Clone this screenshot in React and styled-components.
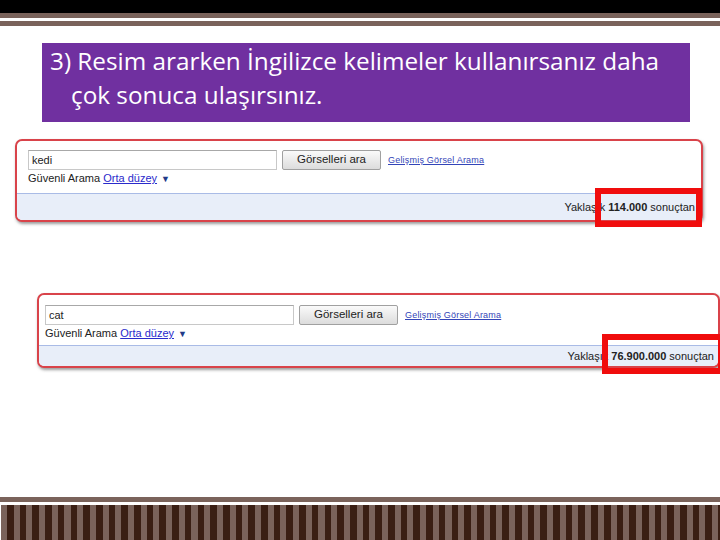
import React from 'react'
import styled, { createGlobalStyle } from 'styled-components'

const Global = createGlobalStyle`
  html, body { margin: 0; padding: 0; background: #fff; }
  body { width: 720px; height: 540px; overflow: hidden; }
`

const Slide = styled.div`
  width: 720px;
  height: 540px;
  display: flex;
  flex-direction: column;
  background: #fff;
`

const TopBlack = styled.div`
  height: 13px;
  background: #000;
`

const Rule = styled.div`
  height: 5px;
  background: #7a635b;
  margin-top: ${props => props.gap || 0}px;
`

const Title = styled.div`
  margin: 17px 0 0 42px;
  width: 648px;
  height: 79px;
  box-sizing: border-box;
  background: #7030a0;
  color: #fff;
  font-family: "Open Sans", Lato, sans-serif;
  font-size: 24.3px;
  line-height: 34px;
  padding: 1px 8px 0 8px;
  p { margin: 0; white-space: nowrap; }
  p + p { padding-left: 21px; }
`

const Shot = styled.div`
  position: relative;
  margin: ${props => props.top}px 0 0 ${props => props.left}px;
  width: ${props => props.width}px;
  height: ${props => props.height}px;
  box-sizing: border-box;
  border: 2px solid #d9434a;
  border-radius: 7px;
  box-shadow: 1px 2px 3px rgba(60, 60, 60, 0.5);
  background: #fff;
  display: flex;
  flex-direction: column;
  font-family: "Liberation Sans", Arial, sans-serif;
`

const Search = styled.div`
  padding: ${props => props.pad}px 0 0 ${props => props.inset}px;
  flex: 1;
`

const Row = styled.div`
  display: flex;
  align-items: center;
  gap: 5px;
`

const Input = styled.div`
  width: 249px;
  height: 20px;
  box-sizing: border-box;
  border: 1px solid #c8c8c8;
  border-top-color: #a8a8a8;
  font-size: 11px;
  line-height: 18px;
  padding-left: 3px;
  color: #222;
`

const Button = styled.div`
  width: 99px;
  height: 20px;
  box-sizing: border-box;
  border: 1px solid #a0a0a0;
  border-radius: 2px;
  background: linear-gradient(#fafafa, #dcdcdc);
  font-size: 11.5px;
  line-height: 17px;
  text-align: center;
  color: #222;
`

const Advanced = styled.a`
  font-size: 9px;
  color: #3345b8;
  text-decoration: underline;
  margin-left: 2px;
  letter-spacing: 0.2px;
`

const Safe = styled.div`
  font-size: 11px;
  color: #222;
  margin-top: 2px;
  a { color: #2a2acc; text-decoration: underline; }
  span { color: #223a88; font-size: 9px; margin-left: 4px; }
`

const ResultBar = styled.div`
  height: ${props => props.h}px;
  border-top: 1px solid #a9bbe6;
  background: #e8eef9;
  border-radius: 0 0 5px 5px;
  display: flex;
  align-items: center;
  justify-content: flex-end;
  padding-right: ${props => props.right}px;
  font-size: 11px;
  color: #222;
  b { margin-left: 3px; margin-right: 3px; }
`

const Highlight = styled.div`
  position: absolute;
  box-sizing: border-box;
  border: 6px solid #f00d0d;
  left: ${props => props.x}px;
  top: ${props => props.y}px;
  width: ${props => props.w}px;
  height: ${props => props.h}px;
`

const Spacer = styled.div`
  flex: 1;
`

const Footer = styled.div`
  height: 35px;
  margin: 3px 0 0 1px;
  background: repeating-linear-gradient(
    90deg,
    #7a635b 0px,
    #7a635b 6px,
    #3a1f14 6px,
    #3a1f14 12.7px
  );
`

function Screenshot({ query, count, top, left, width, height, pad, inset, bar, right, box }) {
  return (
    <Shot top={top} left={left} width={width} height={height}>
      <Search pad={pad} inset={inset}>
        <Row>
          <Input>{query}</Input>
          <Button>Görselleri ara</Button>
          <Advanced>Gelişmiş Görsel Arama</Advanced>
        </Row>
        <Safe>
          Güvenli Arama <a>Orta düzey</a>
          <span>▼</span>
        </Safe>
      </Search>
      <ResultBar h={bar} right={right}>
        Yaklaşık<b>{count}</b>sonuçtan
      </ResultBar>
      <Highlight {...box} />
    </Shot>
  )
}

export default function App() {
  return (
    <Slide>
      <Global />
      <TopBlack />
      <Rule />
      <Rule gap={3} />
      <Title>
        <p>3) Resim ararken İngilizce kelimeler kullanırsanız daha</p>
        <p>çok sonuca ulaşırsınız.</p>
      </Title>
      <Screenshot
        query="kedi"
        count="114.000"
        top={17}
        left={15}
        width={688}
        height={83}
        pad={9}
        inset={11}
        bar={26}
        right={6}
        box={{ x: 578, y: 47, w: 107, h: 39 }}
      />
      <Screenshot
        query="cat"
        count="76.900.000"
        top={71}
        left={37}
        width={683}
        height={75}
        pad={10}
        inset={6}
        bar={20}
        right={4}
        box={{ x: 563, y: 39, w: 122, h: 40 }}
      />
      <Spacer />
      <Rule />
      <Footer />
    </Slide>
  )
}
